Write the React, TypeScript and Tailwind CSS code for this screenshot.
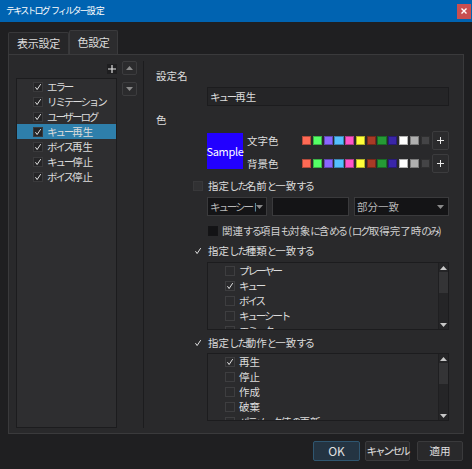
import React from 'react';

const swatches = [
  '#ff6a55', '#55ff66', '#8a66ff', '#55c0ff', '#ff55c8', '#ffff3a',
  '#a83a26', '#259a35', '#3a26a8', '#ffffff', '#b0b0b0', '#444446',
];

const leftItems = ['エラー', 'リミテーション', 'ユーザーログ', 'キュー再生', 'ボイス再生', 'キュー停止', 'ボイス停止'];
const kindItems: [string, boolean][] = [
  ['プレーヤー', false], ['キュー', true], ['ボイス', false], ['キューシート', false], ['エミッター', false],
];
const actionItems: [string, boolean][] = [
  ['再生', true], ['停止', false], ['作成', false], ['破棄', false], ['パラメータ値の更新', false],
];

// kana runs are set tighter, like the narrow kana of the original UI font
function T({ s }: { s: string }) {
  const parts = s.split(/([\u3041-\u30ff]+)/);
  return (
    <>
      {parts.map((p, i) =>
        /[\u3041-\u30ff]/.test(p) ? (
          <span key={i} className="tracking-[-0.2em]">{p}</span>
        ) : (
          <React.Fragment key={i}>{p}</React.Fragment>
        ),
      )}
    </>
  );
}

function CheckMark() {
  return (
    <svg width="10" height="10" viewBox="0 0 10 10">
      <path d="M1.8 5.2 L3.9 8.2 L8.4 1.4" fill="none" stroke="#e8e8e8" strokeWidth="1.2" />
    </svg>
  );
}

function Box({ checked, className = '' }: { checked?: boolean; className?: string }) {
  return (
    <span className={`w-[10px] h-[10px] shrink-0 border flex items-center justify-center ${className}`}>
      {checked && <CheckMark />}
    </span>
  );
}

function Arrow({ up, color = '#8a8a8a' }: { up?: boolean; color?: string }) {
  return (
    <svg width="7" height="4" viewBox="0 0 7 4">
      <path d={up ? 'M0 4 L3.5 0 L7 4 Z' : 'M0 0 L7 0 L3.5 4 Z'} fill={color} />
    </svg>
  );
}

function Plus({ size = 7 }: { size?: number }) {
  return (
    <svg width={size} height={size} viewBox="0 0 7 7">
      <path d="M3.5 0 V7 M0 3.5 H7" stroke="#e8e8e8" strokeWidth="1" />
    </svg>
  );
}

function CheckList({ items }: { items: [string, boolean][] }) {
  return (
    <div className="ml-[51px] w-[242px] h-[68px] border border-[#1c1c1e] bg-[#2b2b2d] flex overflow-hidden">
      <div className="flex-1 min-w-0 overflow-hidden">
        {items.map(([label, checked]) => (
          <div key={label} className="h-[15px] flex items-center pl-[17px]">
            <Box checked={checked} className="border-[#3e3e40] bg-[#2b2b2d]" />
            <span className="ml-[4px] leading-[15px] whitespace-nowrap"><T s={label} /></span>
          </div>
        ))}
      </div>
      <div className="w-[10px] shrink-0 flex flex-col bg-[#252527] border-l border-[#1f1f21]">
        <div className="h-[9px] flex items-center justify-center">
          <Arrow up color="#c8c8c8" />
        </div>
        <div className="h-[21px] bg-[#343436]" />
        <div className="flex-1" />
        <div className="h-[9px] flex items-center justify-center">
          <Arrow color="#c8c8c8" />
        </div>
      </div>
    </div>
  );
}

export default function App() {
  return (
    <div className="w-[472px] h-[469px] bg-[#1f1f21] flex flex-col text-[10.5px] text-[#dcdcdc] font-['Noto_Sans_CJK_JP','Noto_Sans',sans-serif] overflow-hidden">
      {/* title bar */}
      <div className="h-[22px] bg-[#0063b1] flex items-center justify-between pl-[6px] pr-[1px]">
        <span className="text-white text-[9px] leading-[22px] whitespace-pre">
          <T s="テキストログ フィルター設定" />
        </span>
        <span className="w-[14px] h-[15px] bg-[#c94f50] flex items-center justify-center">
          <svg width="6" height="6" viewBox="0 0 6 6">
            <path d="M0.5 0.5 L5.5 5.5 M5.5 0.5 L0.5 5.5" stroke="#fff" strokeWidth="1.4" />
          </svg>
        </span>
      </div>

      <div className="px-[8px] pt-[8px] flex flex-col">
        {/* tabs */}
        <div className="h-[24px] flex items-end">
          <div className="w-[61px] h-[22px] border border-b-0 border-[#38383a] bg-[#262628] flex items-center justify-center text-[11px] tracking-[-0.3px] rounded-t-[2px]">
            表示設定
          </div>
          <div className="w-[49px] h-[24px] border border-b-0 border-[#3a3a3c] bg-[#2c2c2e] flex items-center justify-center text-[11px] tracking-[-0.3px] rounded-t-[2px]">
            色設定
          </div>
        </div>

        {/* panel */}
        <div className="w-[456px] h-[380px] border border-[#3a3a3c] bg-[#29292b] flex pl-[7px] pt-[6px] pb-[5px]">
          {/* left list column */}
          <div className="w-[101px] shrink-0 flex flex-col pt-[3px]">
            <div className="h-[10px] flex justify-end">
              <span className="w-[10px] h-[10px] bg-[#1e1e20] flex items-center justify-center">
                <Plus size={8} />
              </span>
            </div>
            <div className="mt-[4px] flex-1 border border-[#1c1c1e] bg-[#2e2e30]">
              {leftItems.map((label) => (
                <div
                  key={label}
                  className={`h-[15px] flex items-center pl-[16px] ${label === 'キュー再生' ? 'bg-[#2e7fab]' : ''}`}
                >
                  <Box checked className="border-[#3a3a3c] bg-[#252527]" />
                  <span className="ml-[4px] leading-[15px] whitespace-nowrap"><T s={label} /></span>
                </div>
              ))}
            </div>
          </div>

          {/* up/down buttons */}
          <div className="ml-[5px] w-[15px] shrink-0 flex flex-col">
            <div className="h-[14px] border border-[#3c3c3e] bg-[#2b2b2d] rounded-[2px] flex items-center justify-center">
              <Arrow up />
            </div>
            <div className="mt-[7px] h-[14px] border border-[#3c3c3e] bg-[#2b2b2d] rounded-[2px] flex items-center justify-center">
              <Arrow />
            </div>
          </div>

          {/* separator */}
          <div className="ml-[6px] w-px shrink-0 bg-[#1c1c1e]" />

          {/* right settings */}
          <div className="flex-1 min-w-0 flex flex-col pl-[12px]">
            <div className="mt-[7px] h-[15px] leading-[15px]">設定名</div>
            <div className="mt-[4px] ml-[51px] w-[242px] h-[19px] border border-[#1c1c1e] bg-[#252527] flex items-center pl-[2px]">
              <T s="キュー再生" />
            </div>
            <div className="mt-[6px] h-[15px] leading-[15px]">色</div>

            <div className="mt-[4px] ml-[51px] flex items-start">
              <div className="mt-[2px] w-[36px] h-[36px] shrink-0 bg-[#2200ff] flex items-center justify-center text-white text-[11px] tracking-[-0.3px]">
                Sample
              </div>
              <div className="ml-[4px] flex flex-col gap-[4px]">
                {['文字色', '背景色'].map((label) => (
                  <div key={label} className="h-[19px] flex items-center">
                    <span className="w-[55px] shrink-0 leading-[15px]">{label}</span>
                    <div className="flex gap-[1.6px]">
                      {swatches.map((c) => (
                        <span
                          key={c}
                          className="w-[9.2px] h-[9px] shrink-0 border border-black/30"
                          style={{ backgroundColor: c }}
                        />
                      ))}
                    </div>
                    <span className="ml-[2px] w-[17px] h-[19px] shrink-0 border border-[#3c3c3e] bg-[#2b2b2d] rounded-[2px] flex items-center justify-center">
                      <Plus />
                    </span>
                  </div>
                ))}
              </div>
            </div>

            <div className="mt-[5px] ml-[37px] h-[15px] flex items-center">
              <Box className="border-[#38383a] bg-[#313133]" />
              <span className="ml-[5px] leading-[15px] whitespace-nowrap"><T s="指定した名前と一致する" /></span>
            </div>

            <div className="mt-[4px] ml-[51px] w-[242px] h-[19px] flex gap-[5px]">
              <div className="w-[60px] shrink-0 border border-[#3a3a3c] bg-[#141416] flex items-center pl-[2px] pr-[3px] text-[#b8b8b8]">
                <span className="overflow-hidden whitespace-nowrap w-[46px]"><T s="キューシート" /></span>
                <span className="ml-auto"><Arrow /></span>
              </div>
              <div className="w-[77px] shrink-0 border border-[#3a3a3c] bg-[#141416]" />
              <div className="w-[95px] shrink-0 border border-[#3a3a3c] bg-[#141416] flex items-center pl-[2px] pr-[4px] text-[#b8b8b8]">
                <span className="whitespace-nowrap"><T s="部分一致" /></span>
                <span className="ml-auto"><Arrow /></span>
              </div>
            </div>

            <div className="mt-[7px] ml-[52px] h-[15px] flex items-center">
              <Box className="border-[#141416] bg-[#131315]" />
              <span className="ml-[4px] leading-[15px] whitespace-pre text-[#d0d0d0]">
                <T s="関連する項目も対象に含める (ログ取得完了時のみ)" />
              </span>
            </div>

            <div className="mt-[5px] ml-[37px] h-[15px] flex items-center">
              <Box checked className="border-transparent" />
              <span className="ml-[5px] leading-[15px] whitespace-nowrap"><T s="指定した種類と一致する" /></span>
            </div>
            <div className="mt-[4px]">
              <CheckList items={kindItems} />
            </div>

            <div className="mt-[5px] ml-[37px] h-[15px] flex items-center">
              <Box checked className="border-transparent" />
              <span className="ml-[5px] leading-[15px] whitespace-nowrap"><T s="指定した動作と一致する" /></span>
            </div>
            <div className="mt-[3px]">
              <CheckList items={actionItems} />
            </div>
          </div>
        </div>

        {/* footer */}
        <div className="mt-[7px] flex justify-end pr-[1px]">
          <button type="button" className="w-[47px] h-[20px] border border-[#2f5670] bg-[#243442] rounded-[2px] text-[12px] text-[#e0e0e0] flex items-center justify-center">
            OK
          </button>
          <button type="button" className="ml-[5px] w-[45px] h-[20px] border border-[#3a3a3c] bg-[#29292b] rounded-[2px] text-[#e0e0e0] whitespace-nowrap flex items-center justify-center">
            <T s="キャンセル" />
          </button>
          <button type="button" className="ml-[7px] w-[46px] h-[20px] border border-[#3a3a3c] bg-[#29292b] rounded-[2px] text-[#e0e0e0] flex items-center justify-center">
            適用
          </button>
        </div>
      </div>
    </div>
  );
}
